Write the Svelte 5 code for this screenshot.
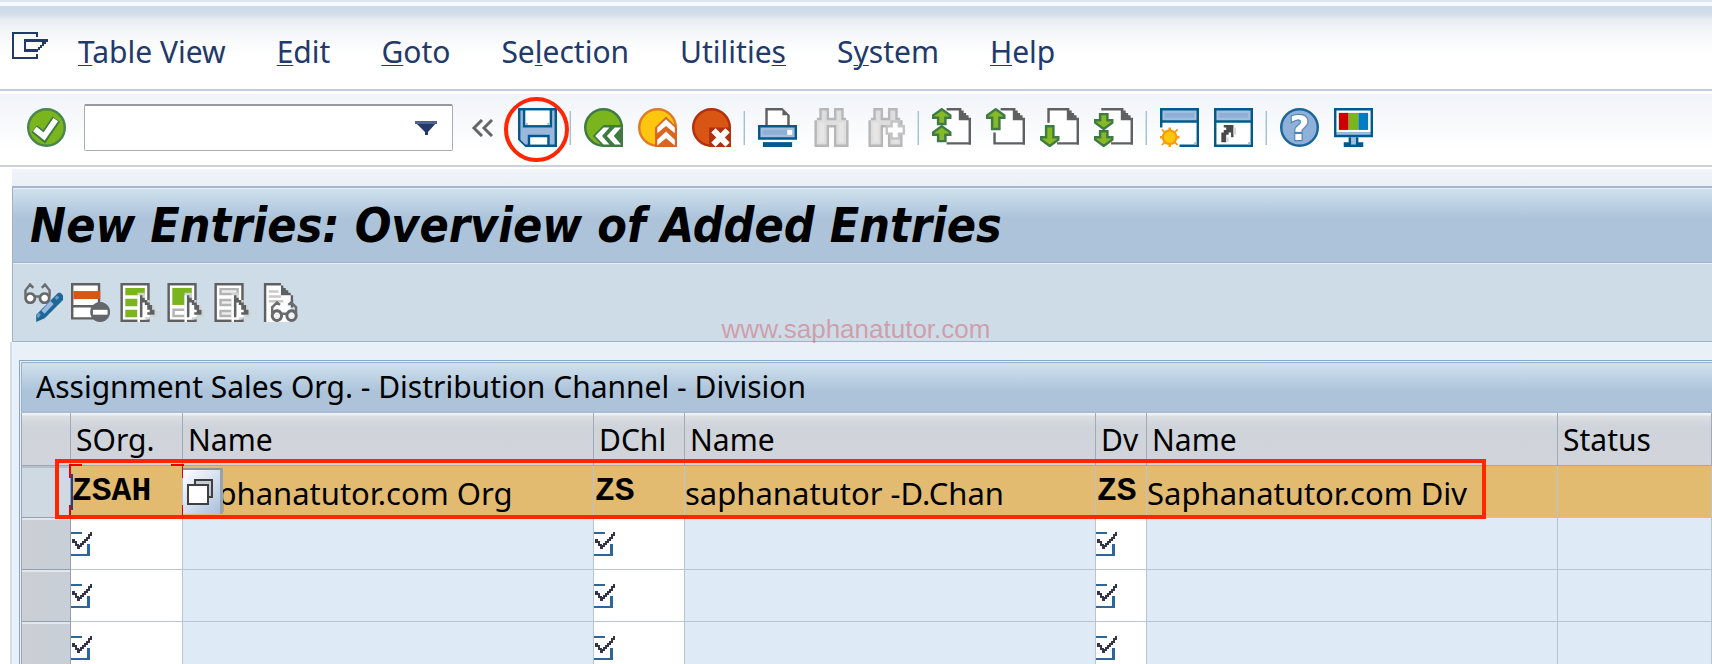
<script lang="ts">
  type Shape = {
    d?: string;
    fill?: string;
    stroke?: string;
    width?: number;
    text?: string;
  };

  const navy = "#005b8c";
  const sky = "#a3bddd";
  const gray = "#5f6061";
  const leaf = "#7ab51d";
  const moss = "#3f7a45";

  const disc = "M8 .5A7.5 7.5 0 0 1 8 15.5A7.5 7.5 0 0 1 8 .5Z";
  const cursor: Shape[] = [
    { d: "M8 4H11V7H13V9H15V11H16V14H13V15H8Z", fill: "#cfd5d2", },
    { d: "M8 5H9V13H10V6H11V8H12V9H13V10H14V11H15V13H13V14H11V15H9V16H8Z", fill: "#fff" },
    { d: "M9 5H10V6H11V7H12V8H13V9H14V11H15V13H12V12H13V11H12V9H11V8H10V14H9Z", fill: gray },
  ];
  const up = (y: number, stem = 3): Shape => ({
    d: `M4 ${y + 0.5}L7.5 ${y + 3}V${y + 4}H5.5V${y + 3.6 + stem}H2.5V${y + 4}H.5V${y + 3}Z`,
    fill: "#86ba25",
    stroke: moss,
    width: 1,
  });
  const down = (y: number, stem = 3): Shape => ({
    d: `M4 ${y + 3.6 + stem}L7.5 ${y + stem + 1}V${y + stem}H5.5V${y + 0.5}H2.5V${y + stem}H.5V${y + stem + 1}Z`,
    fill: "#86ba25",
    stroke: moss,
    width: 1,
  });
  const sheet: Shape = { d: "M4 1H11V5H15V14H4Z", fill: "#fff" };
  const fold: Shape = { d: "M11 0H12V1H13V2H14V3H15V4H16V15H15V5H11Z", fill: gray };
  const windowTop: Shape[] = [
    { d: "M0 0H16V16H0Z", fill: navy },
    { d: "M1 1H15V5H1Z", fill: sky },
    { d: "M2 2H14V4H2Z", fill: "#8eb0d7" },
    { d: "M1 6H15V15H1Z", fill: "#fff" },
    { d: "M14 14H15V15H14Z", fill: sky },
  ];
  const binoculars: Shape[] = [
    { d: "M3 0H7V4H9V0H13V4H14V5H15V16H9V8H7V16H1V5H2V4H3Z", fill: "#b7b7b7" },
    { d: "M4 1H6V5H10V1H12V5H14V15H10V7H6V15H2V5H4Z", fill: "#dedede" },
    { d: "M3 6H5V14H3ZM11 6H13V14H11Z", fill: "#e6e6e6" },
  ];

  const icons: Record<string, Shape[]> = {
    enter: [
      { d: disc, fill: leaf, stroke: "#4a8550", width: 1 },
      { d: "M3 8.5L7 11.8L12 4.6", stroke: moss, width: 3.8 },
      { d: "M3.2 8.6L7 11.7L11.8 4.8", stroke: "#fff", width: 2.3 },
    ],
    save: [
      { d: "M0 0H16V16H3L0 13Z", fill: navy },
      { d: "M1 1H2V8H14V1H15V15H13V11H4V15H3L1 13Z", fill: "#9bb8dc" },
      { d: "M3 1H13V7H3Z", fill: "#fff" },
      { d: "M3 6H4V7H3ZM12 6H13V7H12Z", fill: sky },
      { d: "M5 12H12V15H5Z", fill: "#fff" },
    ],
    back: [
      { d: disc, fill: leaf, stroke: moss, width: 1 },
      { d: "M3.6 11.5L8 7H16V16H8Z", fill: moss },
      { d: "M4.6 11.5L8 8H10.4L7.4 11.5L10.4 15H8ZM9.4 11.5L12.6 8H15.2L12.2 11.5L15.2 15H12.6Z", fill: "#fff" },
    ],
    exit: [
      { d: disc, fill: "#ffc610", stroke: "#e07a28", width: 1 },
      { d: "M7 16V8L11.5 3.5L16 8V16Z", fill: "#db6421" },
      { d: "M7.9 8L11.5 4.6L15.1 8V10.4L11.5 7.4L7.9 10.4ZM7.9 13L11.5 9.6L15.1 13V15.4L11.5 12.4L7.9 15.4Z", fill: "#fff" },
    ],
    cancel: [
      { d: disc, fill: "#d95513", stroke: "#b2300f", width: 1 },
      { d: "M7 8H16V16H7Z", fill: "#b2300f" },
      { d: "M8.8 9.2L14.6 15M14.6 9.2L8.8 15", stroke: "#fff", width: 2.5 },
    ],
    print: [
      { d: "M3 0H10L13 3V7H3Z", fill: gray },
      { d: "M4 1H10V3H12V7H4Z", fill: "#fff" },
      { d: "M0 7H16V13H0Z", fill: navy },
      { d: "M1 8H15V12H1Z", fill: sky },
      { d: "M2 9H12V11H2Z", fill: "#8eb0d7" },
      { d: "M12 9H14V11H12Z", fill: "#fff" },
      { d: "M2 14H14V16H2Z", fill: navy },
    ],
    find: binoculars,
    findNext: [
      ...binoculars,
      { d: "M10 5H14V7H16V11H14V13H10V11H8V7H10Z", fill: "#c4c4c4" },
      { d: "M11 6H13V8H15V10H13V12H11V10H9V8H11Z", fill: "#fff" },
    ],
    firstPage: [
      sheet,
      fold,
      { d: "M6 0H12V1H6ZM6 14H16V15H6Z", fill: gray },
      up(0),
      up(7),
    ],
    previousPage: [
      sheet,
      fold,
      { d: "M6 0H12V1H6ZM3 10H4V14H16V15H3Z", fill: gray },
      up(0, 5),
    ],
    nextPage: [
      sheet,
      fold,
      { d: "M3 0H12V1H4V6H3ZM7 14H16V15H7Z", fill: gray },
      down(7, 5),
    ],
    lastPage: [
      sheet,
      fold,
      { d: "M3 0H12V1H3ZM7 14H16V15H7Z", fill: gray },
      down(2),
      down(9),
    ],
    newSession: [
      ...windowTop,
      { d: "M0 8H8V16H0Z", fill: "#fff" },
      { d: "M3.5 8H4.5V16H3.5ZM0 11.5H8V12.5H0ZM1 8.5L7.5 15L7 15.5L.5 9ZM7 8.5L.5 15L1 15.5L7.5 9Z", fill: "#f79b0c" },
      { d: "M4 9.2A2.8 2.8 0 1 1 3.9 9.2Z", fill: "#ffc610", stroke: "#f79b0c", width: 0.8 },
    ],
    shortcut: [
      ...windowTop,
      { d: "M4 7H8V12H7V10H6V11H5V14H3V10H4V9H5V8H4Z", fill: "#48494b" },
      { d: "M8 8H9V11H8ZM5 12H6V14H5Z", fill: "#d8d8d8" },
    ],
    help: [
      { d: disc, fill: "#8fb1d9", stroke: "#1b659b", width: 1 },
      { text: "?", fill: "#fff", stroke: "#4f86b6" },
    ],
    layout: [
      { d: "M0 0H16V12H0Z", fill: navy },
      { d: "M1 1H15V10H1Z", fill: "#fff" },
      { d: "M1 10H15V11H1Z", fill: sky },
      { d: "M2 2H6V9H2Z", fill: "#cc0000" },
      { d: "M6 2H10V9H6Z", fill: leaf },
      { d: "M10 2H14V9H10Z", fill: "#007cc3" },
      { d: "M6 12H10V14H12V16H4V14H6Z", fill: navy },
      { d: "M7 12H9V15H7Z", fill: sky },
    ],
    display: [
      { d: "M2.5 4.3A1.9 1.9 0 1 0 2.6 4.3ZM8.4 4.3A1.9 1.9 0 1 0 8.5 4.3Z", fill: "#fff", stroke: "#66696b", width: 1.1 },
      { d: "M.6 5.5V3L2.5 .6L3.8 2M4.5 5.5H6.6M7.3 2L8.6 .6L10.5 3V5.5", stroke: "#6b6e70", width: 1 },
      { d: "M14 4H15L16 5V7L8.5 14.5L5 16V13L12 6Z", fill: "#1f6799" },
      { d: "M11.5 8L7.8 12", stroke: "#9dbbe0", width: 1.8 },
      { d: "M14 5.5L13 6.6M6.4 12.5L5.5 14", stroke: "#6d9cc4", width: 1.2 },
    ],
    deleteRow: [
      { d: "M0 0H12V15H0Z", fill: gray },
      { d: "M1 1H11V9H1ZM1 10H11V14H1Z", fill: "#fff" },
      { d: "M1 3.3H12V6.6H1Z", fill: "#d95513" },
      { d: "M12 7.8A4.1 4.1 0 1 1 11.9 7.8Z", fill: "#63666a" },
      { d: "M9 11H15V13H9Z", fill: "#fff" },
    ],
    selectAll: [
      { d: "M1 0H13V16H1Z", fill: gray },
      { d: "M2 1H12V15H2Z", fill: "#fff" },
      { d: "M3 2H11V5H3ZM3 6.5H9V9.5H3ZM3 11H8V14H3Z", fill: leaf },
      ...cursor,
    ],
    selectBlock: [
      { d: "M1 0H13V16H1Z", fill: gray },
      { d: "M2 1H12V15H2Z", fill: "#fff" },
      { d: "M3 2H11V9H3Z", fill: leaf },
      { d: "M3 10.5H8V11.5H4V13H8V14H3Z", fill: "#b3b3b3" },
      ...cursor,
    ],
    deselectAll: [
      { d: "M1 0H13V16H1Z", fill: gray },
      { d: "M2 1H12V15H2Z", fill: "#fff" },
      { d: "M3 2H11V5H3ZM3 6.5H9V9.5H3ZM3 11H8V14H3Z", fill: "#b3b3b3" },
      { d: "M4 3H10V4H4ZM4 7.5H8V8.5H4ZM4 12H8V13H4Z", fill: "#eee" },
      ...cursor,
    ],
    details: [
      { d: "M2 0H9V1H10V2H11V3H12V4H13V5H14V10H12V16H2Z", fill: gray },
      { d: "M3 1H9V5H13V16H3Z", fill: "#fff" },
      { d: "M4 3H8V4H4ZM4 5H9V6H4ZM4 7H10V8H4Z", fill: "#c9c9c9" },
      { d: "M7.3 11.4A1.9 2 0 1 0 7.4 11.4ZM13.3 11.4A1.9 2 0 1 0 13.4 11.4Z", fill: "#f2f2f2", stroke: "#66696b", width: 1.2 },
      { d: "M5.4 12.5V10L7.4 8L8.6 9M9 12.6H11.5M15.2 12.5V10L13.2 8L12 9", stroke: "#6b6e70", width: 1 },
    ],
  };

  const menus = [
    ["", "T", "able View"],
    ["", "E", "dit"],
    ["", "G", "oto"],
    ["Se", "l", "ection"],
    ["Utilitie", "s", ""],
    ["S", "y", "stem"],
    ["", "H", "elp"],
  ];

  const groups = [
    [
      ["back", "Back"],
      ["exit", "Exit"],
      ["cancel", "Cancel"],
    ],
    [
      ["print", "Print"],
      ["find", "Find"],
      ["findNext", "Find next"],
    ],
    [
      ["firstPage", "First page"],
      ["previousPage", "Previous page"],
      ["nextPage", "Next page"],
      ["lastPage", "Last page"],
    ],
    [
      ["newSession", "New session"],
      ["shortcut", "Create shortcut"],
    ],
    [
      ["help", "Help"],
      ["layout", "Customize local layout"],
    ],
  ];

  const actions = [
    ["display", "Display / change"],
    ["deleteRow", "Delete"],
    ["selectAll", "Select all"],
    ["selectBlock", "Select block"],
    ["deselectAll", "Deselect all"],
    ["details", "Details"],
  ];

  const columns = [
    { key: "sorg", label: "SOrg.", editable: true },
    { key: "sorgName", label: "Name" },
    { key: "dchl", label: "DChl", editable: true },
    { key: "dchlName", label: "Name" },
    { key: "dv", label: "Dv", editable: true },
    { key: "dvName", label: "Name" },
    { key: "status", label: "Status" },
  ];

  let rows: Record<string, string>[] = $state([
    {
      sorg: "ZSAH",
      sorgName: "Saphanatutor.com Org",
      dchl: "ZS",
      dchlName: "saphanatutor -D.Chan",
      dv: "ZS",
      dvName: "Saphanatutor.com Div",
    },
    { sorg: "", dchl: "", dv: "" },
    { sorg: "", dchl: "", dv: "" },
    { sorg: "", dchl: "", dv: "" },
  ]);
  let command = $state("");
</script>

{#snippet icon(name: string)}
  <svg class="icon" viewBox="0 0 16 16" aria-hidden="true">
    {#each icons[name] as s}
      {#if s.text}
        <text x="8" y="13" class="glyph" fill={s.fill} stroke={s.stroke}>{s.text}</text>
      {:else}
        <path d={s.d} fill={s.fill ?? "none"} stroke={s.stroke ?? "none"} stroke-width={s.width ?? 0} />
      {/if}
    {/each}
  </svg>
{/snippet}

<div class="window">
  <nav class="menu-bar">
    <button class="menu-icon" aria-label="Menu">
      <svg viewBox="0 0 36 28" width="36" height="28" aria-hidden="true" fill="#22396b">
        <path d="M0 0H26V5H24V2H2V25H24V22H26V27H0Z" />
        <path d="M12 7H36V10H34V12H32V14H30V16H28V18H26V20H12ZM14 10V17H26V15H28V13H30V10Z" fill-rule="evenodd" />
      </svg>
    </button>
    {#each menus as [before, key, after]}
      <button class="menu">{before}<u>{key}</u>{after}</button>
    {/each}
  </nav>

  <div class="toolbar">
    <button class="tool enter" aria-label="Enter">{@render icon("enter")}</button>
    <div class="command">
      <input type="text" aria-label="Command" bind:value={command} />
      <button class="drop" aria-label="Command history">
        <svg viewBox="0 0 22 14" width="22" height="14" aria-hidden="true">
          <path d="M0 1H22L13 11V14H10V11Z" fill="#22396b" />
          <path d="M0 0H22V3H0Z" fill="#51628c" />
        </svg>
      </button>
    </div>
    <button class="collapse" aria-label="Collapse">
      <svg viewBox="0 0 22 18" width="22" height="18" aria-hidden="true" fill="none" stroke="#666" stroke-width="3">
        <path d="M11 1L3 9L11 17M21 1L13 9L21 17" />
      </svg>
    </button>
    <button class="tool save" aria-label="Save">{@render icon("save")}</button>
    {#each groups as group}
      <span class="separator"></span>
      <div class="group">
        {#each group as [name, label]}
          <button class="tool" aria-label={label}>{@render icon(name)}</button>
        {/each}
      </div>
    {/each}
  </div>

  <main>
    <section class="panel">
      <h1>New Entries: Overview of Added Entries</h1>
      <div class="actions">
        {#each actions as [name, label]}
          <button class="tool" aria-label={label}>{@render icon(name)}</button>
        {/each}
      </div>
    </section>

    <section class="content">
      <div class="grid">
        <h2>Assignment Sales Org. - Distribution Channel - Division</h2>
        <table>
          <colgroup>
            <col class="w-selector" />
            <col class="w-sorg" />
            <col class="w-name" />
            <col class="w-dchl" />
            <col class="w-name" />
            <col class="w-dv" />
            <col class="w-name" />
            <col />
          </colgroup>
          <thead>
            <tr>
              <th aria-label="Select"></th>
              {#each columns as column}
                <th>{column.label}</th>
              {/each}
            </tr>
          </thead>
          <tbody>
            {#each rows as row, i}
              <tr class:current={i === 0}>
                <td class="selector"><button aria-label="Select row {i + 1}"></button></td>
                {#each columns as column}
                  <td class:editable={column.editable}>
                    {#if column.editable}
                      <div class="field">
                        {#if i > 0}
                          <svg class="required" viewBox="0 0 21 24" aria-hidden="true">
                            <path d="M0 0H11V2H0ZM16 12H19V24H0V22H16Z" fill="#2f6699" />
                            <path d="M1 7H4V9H6V12H8V13H9V11H11V9H13V7H15V5H17V2H19V0H21V4H19V7H17V9H15V11H13V13H11V15H9V17H6V14H4V11H1Z" fill="#33344a" />
                          </svg>
                        {/if}
                        <input
                          type="text"
                          aria-label="{column.label} row {i + 1}"
                          bind:value={row[column.key]}
                        />
                      </div>
                      {#if i === 0 && column.key === "sorg"}
                        <span class="focus"></span>
                      {/if}
                    {:else}
                      {row[column.key] ?? ""}
                      {#if i === 0 && column.key === "sorgName"}
                        <button class="matchcode" aria-label="Search help">
                          <svg viewBox="0 0 26 26" width="26" height="26" aria-hidden="true" stroke="#403f3e" stroke-width="2">
                            <path d="M8 1H25V18H8Z" fill="#c3cad8" />
                            <path d="M1 6H21V25H1Z" fill="#fff" />
                          </svg>
                        </button>
                      {/if}
                    {/if}
                  </td>
                {/each}
              </tr>
            {/each}
          </tbody>
        </table>
        <div class="highlight"></div>
      </div>
    </section>
  </main>

  <div class="watermark">www.saphanatutor.com</div>
</div>

<style>
  :global(body) {
    margin: 0;
    background: #fff;
  }

  .window {
    position: relative;
    height: 100vh;
    display: flex;
    flex-direction: column;
    overflow: hidden;
    font-family: "Noto Sans", "DejaVu Sans Condensed", sans-serif;
    font-size: 30px;
    line-height: 36px;
    color: #000;
  }

  button {
    padding: 0;
    border: 0;
    background: none;
    font: inherit;
    color: inherit;
    cursor: pointer;
  }

  button svg {
    display: block;
  }

  input {
    box-sizing: border-box;
    min-width: 0;
    flex: 1;
    padding: 0;
    border: 0;
    outline: 0;
    background: none;
    font: inherit;
    color: inherit;
  }

  .menu-bar {
    flex: none;
    display: flex;
    align-items: center;
    gap: 51px;
    box-sizing: border-box;
    height: 91px;
    padding: 12px 12px 0;
    border-top: 2px solid #dde5f0;
    border-bottom: 2px solid #c5ccd9;
    background: linear-gradient(#f6f9fd 4px, #ccd9e8 4px, #d2dde9 12px, #e9edf2 18px, #f8f9fb 36px, #fff 54px);
    color: #22396b;
  }

  .menu-icon {
    margin-right: -21px;
    padding-bottom: 12px;
  }

  .menu {
    white-space: nowrap;
  }

  .menu u {
    text-decoration-thickness: 1px;
    text-underline-offset: 2px;
  }

  .toolbar {
    flex: none;
    display: flex;
    align-items: center;
    gap: 12px;
    box-sizing: border-box;
    height: 76px;
    padding: 0 27px 4px;
    border-top: 3px solid #fff;
    border-bottom: 2px solid #ccd0dd;
    background: linear-gradient(#f1f4f9, #fff 80%);
  }

  .tool {
    flex: none;
    width: 39px;
    height: 39px;
  }

  .icon {
    width: 39px;
    height: 39px;
  }

  .glyph {
    font: bold 14px "DejaVu Sans", sans-serif;
    text-anchor: middle;
    stroke-width: 1px;
    paint-order: stroke;
  }

  .enter {
    margin-right: 6px;
  }

  .command {
    display: flex;
    align-items: center;
    box-sizing: border-box;
    width: 369px;
    height: 47px;
    margin-right: 6px;
    padding: 0 15px;
    border: 1px solid #a9adb2;
    border-top: 2px solid #97999c;
    border-radius: 2px;
    background: #fff;
  }

  .collapse {
    margin-right: 13px;
  }

  .save {
    position: relative;
  }

  .save::after {
    content: "";
    position: absolute;
    left: -14px;
    top: -11px;
    box-sizing: border-box;
    width: 65px;
    height: 65px;
    border: 4px solid #ff2600;
    border-radius: 50%;
  }

  .separator {
    width: 1px;
    height: 34px;
    margin-right: 1px;
    border-left: 1px solid #d3e3f2;
    background: #a5bfda;
  }

  .group {
    display: flex;
    gap: 15px;
  }

  main {
    flex: none;
    padding: 19px 0 0 10px;
    background: linear-gradient(#f1f4f9, #e9eff7 20px) no-repeat 12px 2px, #fff;
  }

  .panel {
    border: 1px solid #9fb2c6;
    border-right: 0;
    border-top: 2px solid #a5b6c9;
    margin-left: 2px;
    background: #cedce7;
  }

  h1 {
    margin: 0;
    padding: 10px 17px 11px;
    border-top: 1px solid #e4eef6;
    border-bottom: 1px solid #9fb3c8;
    background: linear-gradient(#cfe1ed, #acc3da 40%, #adc3da);
    font-family: "DejaVu Sans Condensed", sans-serif;
    font-size: 48px;
    line-height: 52px;
    font-style: italic;
    font-weight: bold;
    white-space: nowrap;
  }

  .actions {
    display: flex;
    gap: 8px;
    padding: 19px 11px;
    border-top: 1px solid #e8f0f6;
  }

  .content {
    padding: 18px 0 0 7px;
    border-left: 2px solid #d3dce8;
    background: #e9f0f7;
  }

  .grid {
    position: relative;
    padding: 1px 0 0 1px;
    border: 1px solid #86a6c8;
    border-right: 0;
  }

  h2 {
    margin: 0;
    padding: 6px 14px;
    border: 1px solid #9ab0c8;
    border-right: 0;
    border-bottom: 2px solid #a9bcd2;
    background: linear-gradient(#cfe1ed, #acc3da 60%, #adc3da);
    font-size: 30px;
    line-height: 36px;
    font-weight: normal;
    white-space: nowrap;
  }

  table {
    width: 100%;
    table-layout: fixed;
    border-collapse: separate;
    border-spacing: 0;
    border-left: 1px solid #9ba7b6;
    font-size: 31px;
  }

  .w-selector {
    width: 49px;
  }

  .w-sorg {
    width: 112px;
  }

  .w-name {
    width: 411px;
  }

  .w-dchl {
    width: 91px;
  }

  .w-dv {
    width: 51px;
  }

  th {
    box-sizing: border-box;
    height: 53px;
    padding: 2px 0 0 5px;
    border-right: 1px solid #a2aab6;
    border-bottom: 1px solid #a0a8b4;
    background: linear-gradient(#eef1f4 2px, #dadfe3 3px, #cfd3da 14px, #d1d4db);
    font-size: 30px;
    font-weight: normal;
    text-align: left;
    white-space: nowrap;
  }

  td {
    position: relative;
    box-sizing: border-box;
    height: 52px;
    padding: 2px 0 0;
    border-right: 1px solid #b9c4d0;
    border-bottom: 1px solid #b9c4d0;
    background: #deeaf6;
    white-space: nowrap;
  }

  td.editable {
    padding: 0;
    background: #fff;
  }

  .current td {
    background: #e2bb70;
  }

  td.selector {
    padding: 0;
    border-color: #93a0b0;
    background: linear-gradient(90deg, #cccfd4, #c8cfd8);
    box-shadow: inset 0 2px #e3e7eb;
  }

  .current td.selector {
    background: #cfd9e2;
    box-shadow: inset 0 2px #b4c0cc;
  }

  .selector button {
    display: block;
    width: 100%;
    height: 48px;
  }

  .field {
    display: flex;
    align-items: center;
    height: 51px;
  }

  .required {
    flex: none;
    width: 21px;
    height: 24px;
  }

  .field input {
    height: 40px;
    padding: 0 0 0 1px;
    font-family: "Courier New", "Liberation Mono", monospace;
    font-size: 33px;
    font-weight: bold;
  }

  /* corner marks and caret of the focused cell */
  .focus {
    position: absolute;
    inset: -2px;
    pointer-events: none;
    background:
      linear-gradient(#e60000, #e60000) 0 0 / 13px 2px,
      linear-gradient(#e60000, #e60000) 0 0 / 2px 14px,
      linear-gradient(#e60000, #e60000) 100% 0 / 13px 2px,
      linear-gradient(#e60000, #e60000) 100% 0 / 2px 14px,
      linear-gradient(#e60000, #e60000) 0 100% / 13px 2px,
      linear-gradient(#e60000, #e60000) 0 100% / 2px 14px,
      linear-gradient(#e60000, #e60000) 100% 100% / 13px 2px,
      linear-gradient(#e60000, #e60000) 100% 100% / 2px 14px,
      linear-gradient(#22408c, #22408c) 2px 50% / 2px 36px;
    background-repeat: no-repeat;
  }

  .matchcode {
    position: absolute;
    left: 0;
    top: 2px;
    box-sizing: border-box;
    width: 40px;
    height: 46px;
    padding: 8px 4px;
    border-top: 2px solid #8f959d;
    border-right: 3px solid #98a3b1;
    background: linear-gradient(135deg, #fdfeff, #d5e0ef 50%, #a9bfdb);
  }

  .highlight {
    position: absolute;
    left: 35px;
    top: 98px;
    box-sizing: border-box;
    width: 1431px;
    height: 60px;
    border: 4px solid #ff2600;
    pointer-events: none;
  }

  .watermark {
    position: absolute;
    left: 50%;
    top: 50%;
    transform: translate(-50%, -50%);
    padding-bottom: 6px;
    font-family: "Liberation Sans", Arial, sans-serif;
    font-size: 26px;
    line-height: 36px;
    color: rgba(208, 96, 112, 0.5);
    pointer-events: none;
  }
</style>
